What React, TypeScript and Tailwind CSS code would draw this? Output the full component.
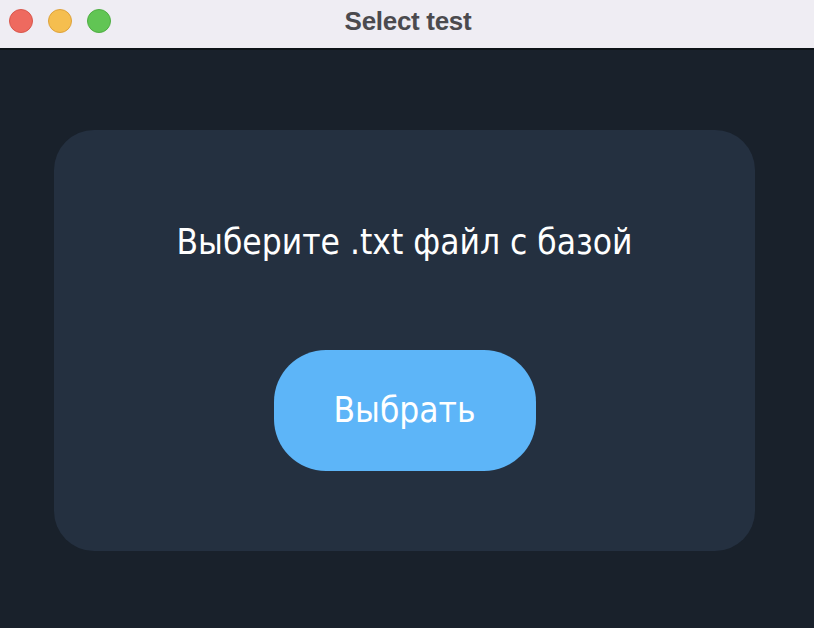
export default function App() {
  return (
    <div className="flex h-[628px] w-[814px] flex-col overflow-hidden bg-[#19212b]">
      <header className="relative flex h-[50px] shrink-0 items-center justify-center border-b-2 border-[#0e1318] bg-[#efedf3] pb-[7px]">
        <div className="absolute left-[9px] top-[9px] flex gap-[15px]">
          <span className="size-[24px] rounded-full border border-[#d9574c] bg-[#ee6a5f]" />
          <span className="size-[24px] rounded-full border border-[#dea23b] bg-[#f5be4f]" />
          <span className="size-[24px] rounded-full border border-[#4fae43] bg-[#61c554]" />
        </div>
        <h1 className="ml-[2px] font-['Liberation_Sans',sans-serif] text-[26px] leading-[30px] font-bold tracking-[-0.3px] text-[#4b4a4e]">
          Select test
        </h1>
      </header>

      <main className="flex flex-1 items-start pl-[54px] pt-[80px]">
        <section className="flex h-[421px] w-[701px] flex-col items-center rounded-[40px] bg-[#243040] pt-[88px] font-['DejaVu_Sans_Condensed','DejaVu_Sans',sans-serif] text-white">
          <p className="text-[35px] leading-[48px]">Выберите .txt файл с базой</p>
          <button className="mt-[84px] flex h-[121px] w-[262px] items-center justify-center rounded-[52px] bg-[#5db5f8] text-[35px] text-white">
            Выбрать
          </button>
        </section>
      </main>
    </div>
  );
}
